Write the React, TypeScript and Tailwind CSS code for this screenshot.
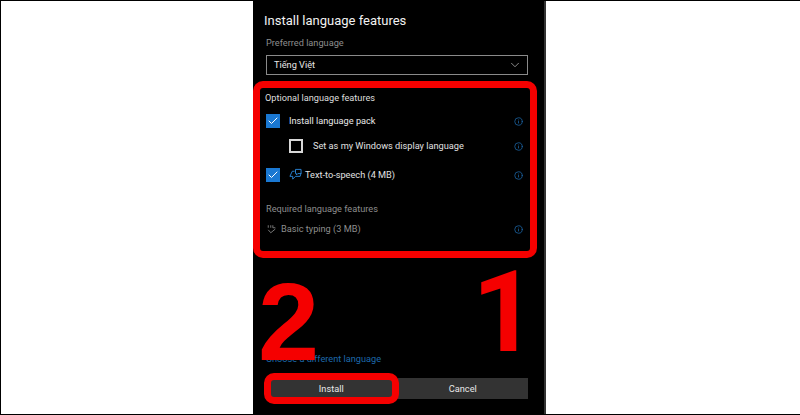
import { Check, ChevronDown, Info } from 'lucide-react'

const font = { fontFamily: 'Roboto, sans-serif' }

function InfoIcon() {
  return <Info className="h-[9px] w-[9px] text-[#1d69ab]" strokeWidth={2} />
}

function CheckBox({ checked }: { checked?: boolean }) {
  if (!checked) {
    return <div className="h-[14px] w-[14px] border-2 border-[#d8d8d8]" />
  }
  return (
    <div className="flex h-[14px] w-[14px] items-center justify-center bg-[#1a78d2]">
      <Check className="h-[12px] w-[12px] text-white" strokeWidth={2} />
    </div>
  )
}

export default function App() {
  return (
    <div
      className="relative h-[415px] w-[800px] overflow-hidden border-t border-b border-l border-black bg-white"
      style={font}
    >
      <div className="ml-[252px] flex h-full w-[293px] flex-col border-r-2 border-[#333] bg-black pl-[13px] pr-[16px]">
        <h1 className="-ml-[2px] mt-[11px] text-[13px] leading-[18px] text-[#f2f2f2]">Install language features</h1>
        <p className="mt-[6px] text-[9.2px] leading-[14px] text-[#8d8d8d]">Preferred language</p>
        <div className="mt-[5px] flex h-[20px] items-center justify-between border border-[#8a8a8a] pl-[7px] pr-[5px] text-[9.2px] text-[#e8e8e8]">
          <span>Tiếng Việt</span>
          <ChevronDown className="h-[14px] w-[14px] text-[#bbb]" strokeWidth={1.25} />
        </div>

        <p className="-ml-[1px] mt-[16px] text-[9.2px] leading-[14px] text-[#dedede]">Optional language features</p>
        <div className="mt-[8px] flex h-[16px] items-center justify-between pr-[5px]">
          <div className="flex items-center gap-[9px]">
            <CheckBox checked />
            <span className="text-[9.2px] text-[#e8e8e8]">Install language pack</span>
          </div>
          <InfoIcon />
        </div>
        <div className="mt-[9px] flex h-[16px] items-center justify-between pl-[23px] pr-[5px]">
          <div className="flex items-center gap-[10px]">
            <CheckBox />
            <span className="text-[9.2px] text-[#e0e0e0]">Set as my Windows display language</span>
          </div>
          <InfoIcon />
        </div>
        <div className="mt-[13px] flex h-[16px] items-center justify-between pr-[5px]">
          <div className="flex items-center gap-[9px]">
            <CheckBox checked />
            <div className="flex items-center gap-[3px]">
              <svg viewBox="0 0 14 14" className="h-[13px] w-[13px] text-[#2a86d8]" fill="none" stroke="currentColor" strokeWidth={1}>
                <path d="M6 3.5H3.5L1 9h3v3l3-3h5l1-3.5" />
                <path d="M7 1.5h6v4.5h-3.5L8 7.5V6H7z" />
              </svg>
              <span className="text-[9.2px] text-[#e0e0e0]">Text-to-speech (4 MB)</span>
            </div>
          </div>
          <InfoIcon />
        </div>

        <p className="mt-[19px] text-[9.2px] leading-[14px] text-[#8d8d8d]">Required language features</p>
        <div className="mt-[5px] flex h-[16px] items-center justify-between pr-[5px]">
          <div className="flex items-center gap-[4px] pl-[1px]">
            <svg viewBox="0 0 12 12" className="h-[10px] w-[10px] text-[#8d8d8d]" fill="none" stroke="currentColor" strokeWidth={1}>
              <path d="M1.5 1.5v3M4.5 1.5v3M7 1.5v3h3" />
              <path d="M1.5 7 4.5 10.5 10 6" />
            </svg>
            <span className="text-[9.2px] text-[#8d8d8d]">Basic typing (3 MB)</span>
          </div>
          <InfoIcon />
        </div>

        <a className="mt-auto text-[9.2px] leading-[14px] text-[#1d69ab]">Choose a different language</a>
        <div className="mb-[15px] mt-[12px] flex h-[21px] gap-[1px] text-[9.2px] text-[#e8e8e8]">
          <button className="flex-1 bg-[#333]">Install</button>
          <button className="flex-1 bg-[#333]">Cancel</button>
        </div>
      </div>

      {/* annotations over the dialog */}
      <div className="absolute left-[252px] top-[80px] h-[177px] w-[284px] rounded-[10px] border-[7px] border-[#f50000]" />
      <div className="absolute left-[263px] top-[372px] h-[31px] w-[135px] rounded-[10px] border-[7px] border-[#f50000]" />
      <span className="absolute left-[257px] top-[259px] text-[110px] font-bold leading-[124px] text-[#f50000]" style={{ fontFamily: '"Liberation Sans", sans-serif' }}>2</span>
      <span className="absolute left-[471px] top-[248px] text-[113px] font-bold leading-[127px] text-[#f50000]" style={{ fontFamily: 'Roboto, sans-serif' }}>1</span>
    </div>
  )
}
